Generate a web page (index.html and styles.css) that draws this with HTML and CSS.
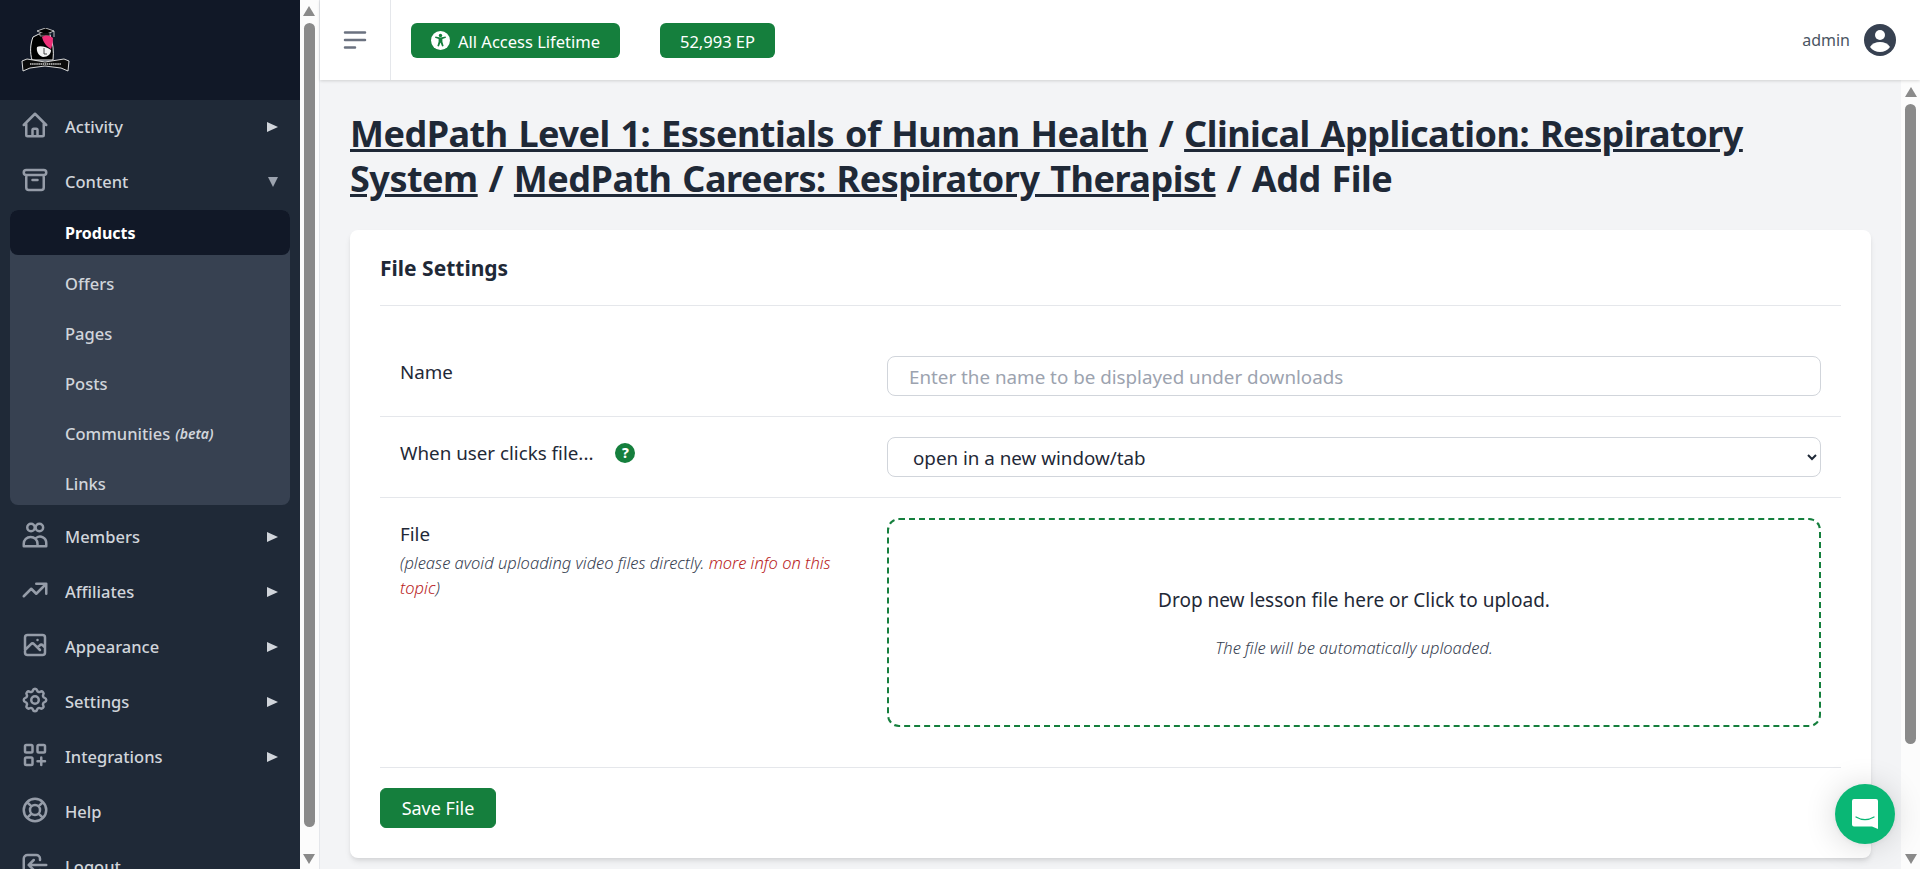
FILE: index.html
```html
<!DOCTYPE html>
<html lang="en">
<head>
<meta charset="utf-8">
<title>Add File</title>
<link rel="stylesheet" href="styles.css">
</head>
<body>
<div class="app">
  <aside class="sidebar-wrap">
    <nav class="sidebar">
      <div class="brand">
        <svg class="logo" viewBox="0 0 49 44" aria-hidden="true">
          <path d="M12 9C9 17 9 25 11 32H32C33 24 32 14 29 7L18 6Z" fill="#000" stroke="#fff" stroke-width=".9"/>
          <path d="M16 3 24.500 0 33 3 24.500 6.500Z" fill="#000" stroke="#fff" stroke-width=".7"/>
          <path d="M19 5V8H29V5" fill="#111" stroke="#ddd" stroke-width=".6"/>
          <path d="M33 3V9" stroke="#fff" stroke-width=".7"/>
          <path d="M21 9C24 6.500 29 7 32 10 32 14 31 18 30 21 26 19 22 14 21 9Z" fill="#ee2f78"/>
          <path d="M16 19C19 17 26 19 30 22 30 26 27 29 22 29 18 28 15 24 16 19Z" fill="#f2f2f2"/>
          <path d="M23 20V26H26" fill="none" stroke="#222" stroke-width=".8"/>
          <path d="M1 33 6 31 24 34 43 31 48 33 47 43 40 40 24 38 9 40 2 43Z" fill="#0b0b0b" stroke="#eee" stroke-width=".9"/>
          <path d="M9 36H40" stroke="#9b9b9b" stroke-width="2" stroke-dasharray="1.500 .6"/>
        </svg>
      </div>
      <ul class="menu">
        <li class="item"><svg class="ico" viewBox="0 0 24 24"><path d="M3 12l2-2m0 0l7-7 7 7M5 10v10a1 1 0 001 1h3m10-11l2 2m-2-2v10a1 1 0 01-1 1h-3m-6 0a1 1 0 001-1v-4a1 1 0 011-1h2a1 1 0 011 1v4a1 1 0 001 1m-6 0h6"/></svg><span class="label">Activity</span><span class="caret"></span></li>
        <li class="item"><svg class="ico" viewBox="0 0 24 24"><path d="M5 8h14M5 8a2 2 0 110-4h14a2 2 0 110 4M5 8v10a2 2 0 002 2h10a2 2 0 002-2V8m-9 4h4"/></svg><span class="label">Content</span><span class="caret down"></span></li>
        <li class="submenu">
          <a class="sub active">Products</a>
          <a class="sub">Offers</a>
          <a class="sub">Pages</a>
          <a class="sub">Posts</a>
          <a class="sub">Communities <em class="beta">(beta)</em></a>
          <a class="sub">Links</a>
        </li>
        <li class="item"><svg class="ico" viewBox="0 0 24 24"><circle cx="8.800" cy="6" r="3"/><circle cx="15.500" cy="6" r="3"/><path d="M3 21v-2a5.500 5.500 0 0111 0v2zM13 14.300A5 5 0 0121 18.500V21h-7"/></svg><span class="label">Members</span><span class="caret"></span></li>
        <li class="item"><svg class="ico" viewBox="0 0 24 24"><path d="M13 7h8m0 0v8m0-8l-8 8-4-4-6 6"/></svg><span class="label">Affiliates</span><span class="caret"></span></li>
        <li class="item"><svg class="ico" viewBox="0 0 24 24"><path d="M4 16l4.586-4.586a2 2 0 012.828 0L16 16m-2-2l1.586-1.586a2 2 0 012.828 0L20 14m-6-6h.01M6 20h12a2 2 0 002-2V6a2 2 0 00-2-2H6a2 2 0 00-2 2v12a2 2 0 002 2z"/></svg><span class="label">Appearance</span><span class="caret"></span></li>
        <li class="item"><svg class="ico" viewBox="0 0 24 24"><path d="M10.325 4.317c.426-1.756 2.924-1.756 3.350 0a1.724 1.724 0 002.573 1.066c1.543-.94 3.310.826 2.370 2.370a1.724 1.724 0 001.065 2.572c1.756.426 1.756 2.924 0 3.350a1.724 1.724 0 00-1.066 2.573c.94 1.543-.826 3.310-2.370 2.370a1.724 1.724 0 00-2.572 1.065c-.426 1.756-2.924 1.756-3.350 0a1.724 1.724 0 00-2.573-1.066c-1.543.94-3.310-.826-2.370-2.370a1.724 1.724 0 00-1.065-2.572c-1.756-.426-1.756-2.924 0-3.350a1.724 1.724 0 001.066-2.573c-.94-1.543.826-3.310 2.370-2.370.996.608 2.296.07 2.572-1.065z"/><path d="M15 12a3 3 0 11-6 0 3 3 0 016 0z"/></svg><span class="label">Settings</span><span class="caret"></span></li>
        <li class="item"><svg class="ico" viewBox="0 0 24 24"><path d="M4 5a1 1 0 011-1h4a1 1 0 011 1v4a1 1 0 01-1 1H5a1 1 0 01-1-1V5zM14 5a1 1 0 011-1h4a1 1 0 011 1v4a1 1 0 01-1 1h-4a1 1 0 01-1-1V5zM4 15a1 1 0 011-1h4a1 1 0 011 1v4a1 1 0 01-1 1H5a1 1 0 01-1-1v-4zM14 17h6m-3-3v6"/></svg><span class="label">Integrations</span><span class="caret"></span></li>
        <li class="item"><svg class="ico" viewBox="0 0 24 24"><path d="M18.364 5.636l-3.536 3.536m0 5.656l3.536 3.536M9.172 9.172L5.636 5.636m3.536 9.192l-3.536 3.536M21 12a9 9 0 11-18 0 9 9 0 0118 0zm-5 0a4 4 0 11-8 0 4 4 0 018 0z"/></svg><span class="label">Help</span></li>
        <li class="item"><svg class="ico" viewBox="0 0 24 24"><path d="M11 16l-4-4m0 0l4-4m-4 4h14m-5 4v1a3 3 0 01-3 3H6a3 3 0 01-3-3V7a3 3 0 013-3h7a3 3 0 013 3v1"/></svg><span class="label">Logout</span></li>
      </ul>
    </nav>
    <div class="scrollbar scrollbar-side">
      <span class="arrow up"></span>
      <span class="track"><span class="thumb thumb-left"></span></span>
      <span class="arrow dn"></span>
    </div>
  </aside>

  <div class="main">
    <header class="topbar">
      <div class="burger">
        <svg viewBox="0 0 24 24"><path d="M4 6h16M4 12h16M4 18h8"/></svg>
      </div>
      <div class="pills">
        <span class="pill pill-a">
          <svg class="a11y" viewBox="0 0 20 20"><circle cx="10" cy="10" r="10" fill="#fff"/><circle cx="10" cy="4.800" r="1.800" fill="#157f3d"/><path d="M4.200 7.200 8 8.400V11.200L6.700 15.800 8.300 16.300 10 12 11.700 16.300 13.300 15.800 12 11.200V8.400L15.800 7.200 15.300 5.900C12 7 8 7 4.700 5.900Z" fill="#157f3d"/></svg>
          <span class="pill-text">All Access Lifetime</span>
        </span>
        <span class="pill pill-b"><span class="pill-text">52,993 EP</span></span>
      </div>
      <div class="user">
        <span class="username">admin</span>
        <svg class="avatar" viewBox="0 0 32 32"><circle cx="16" cy="16" r="16" fill="#374151"/><circle cx="16" cy="11" r="5" fill="#fff"/><path d="M6 23c2-3.200 5.800-5 10-5s8 1.800 10 5c-2.500 3.200-6 5-10 5s-7.500-1.800-10-5z" fill="#fff"/></svg>
      </div>
    </header>
    <div class="content-wrap">
      <main class="content">
        <h1 class="title"><a>MedPath Level 1: Essentials of Human Health</a> / <a>Clinical Application: Respiratory System</a> / <a>MedPath Careers: Respiratory Therapist</a> / Add File</h1>
        <section class="card">
          <h2 class="card-title">File Settings</h2>
          <div class="row row-first">
            <label class="cell-label">Name</label>
            <div class="cell-field"><input class="input" type="text" placeholder="Enter the name to be displayed under downloads"></div>
          </div>
          <div class="row">
            <label class="cell-label">When user clicks file... <span class="help">?</span></label>
            <div class="cell-field"><select class="input select"><option>open in a new window/tab</option></select></div>
          </div>
          <div class="row row-file">
            <div class="cell-label">File
              <p class="hint">(please avoid uploading video files directly. <span class="hint-link">more info on this topic</span>)</p>
            </div>
            <div class="cell-field">
              <div class="drop">
                <p class="drop-main">Drop new lesson file here or Click to upload.</p>
                <p class="drop-sub">The file will be automatically uploaded.</p>
              </div>
            </div>
          </div>
          <div class="actions"><button class="save" type="button">Save File</button></div>
        </section>
      </main>
      <div class="scrollbar scrollbar-main">
        <span class="arrow up"></span>
        <span class="track"><span class="thumb thumb-right"></span></span>
        <span class="arrow dn"></span>
      </div>
    </div>
  </div>
</div>
<div class="chat">
  <svg viewBox="0 0 26 30"><path d="M2 0h22a2 2 0 012 2v28l-6-2.500H2a2 2 0 01-2-2V2a2 2 0 012-2z" fill="#fff"/><path d="M4 18c5.500 3.200 12.500 3.200 18 0" fill="none" stroke="#0ab775" stroke-width="1.300" stroke-linecap="round"/></svg>
</div>
</body>
</html>
```
FILE: styles.css
```css
* { box-sizing: border-box; }
html, body { margin: 0; height: 100%; overflow: hidden; }
body { font-family: "Noto Sans", sans-serif; color: #1f2937; background: #f3f4f6; }
.app { display: flex; height: 869px; }

.sidebar-wrap { display: flex; flex: none; width: 320px; height: 869px; }
.sidebar { width: 300px; background: #1f2937; height: 869px; overflow: hidden; }
.brand { height: 100px; background: #111827; display: flex; align-items: center; padding-left: 21px; }
.logo { width: 49px; height: 44px; }
.menu { list-style: none; margin: 0; padding: 0; }
.item { display: flex; align-items: center; height: 55px; padding: 0 22px 2px 20px; color: #d1d5db; font-size: 16.500px; font-weight: 500; }
.ico { width: 30px; height: 30px; flex: none; fill: none; stroke: #959ca8; stroke-width: 2; stroke-linecap: round; stroke-linejoin: round; margin: 0 15px 3px 0; }
.label { flex: 1; }
.caret { width: 0; height: 0; border-left: 11px solid #d1d5db; border-top: 5px solid transparent; border-bottom: 5px solid transparent; }
.caret.down { border-left: 5.500px solid transparent; border-right: 5.500px solid transparent; border-top: 10px solid #9ca3af; border-bottom: 0; }
.submenu { margin: 0 10px 5px; background: #374151; border-radius: 8px; }
.sub { display: flex; align-items: center; height: 50px; padding: 6px 0 0 55px; color: #d1d5db; font-size: 16.500px; font-weight: 500; border-radius: 8px; gap: 5px; }
.sub.active { height: 45px; padding-top: 0; background: #111827; color: #fff; font-size: 16px; font-weight: 700; }
.beta { font-size: 14px; font-weight: 600; }

.scrollbar { background: #fcfcfc; display: flex; flex-direction: column; align-items: center; }
.scrollbar-side { width: 20px; padding: 6px 1px 5px 0; border-right: 1px solid #e5e7eb; }
.scrollbar-main { width: 19px; padding: 7px 0 5px; }
.arrow { width: 0; height: 0; flex: none; border-left: 6.500px solid transparent; border-right: 6.500px solid transparent; }
.arrow.up { border-bottom: 10px solid #8a8a8a; }
.arrow.dn { border-top: 10px solid #8a8a8a; }
.track { flex: 1; width: 100%; display: flex; justify-content: center; }
.thumb { display: block; width: 11px; background: #8a8a8a; border-radius: 6px; }
.thumb-left { height: 804px; margin-top: 7px; }
.thumb-right { height: 640px; margin-top: 7px; }

.main { flex: 1; min-width: 0; display: flex; flex-direction: column; height: 869px; }
.topbar { flex: none; height: 80px; background: #fff; display: flex; align-items: center; box-shadow: 0 1px 3px rgba(0,0,0,.15); position: relative; z-index: 1; }
.burger { width: 71px; height: 80px; border-right: 1px solid #e5e7eb; display: flex; align-items: center; justify-content: center; }
.burger svg { width: 30px; height: 30px; fill: none; stroke: #6b7280; stroke-width: 2; stroke-linecap: round; }
.pills { display: flex; gap: 40px; margin-left: 20px; flex: 1; }
.pill { display: inline-flex; align-items: center; height: 35px; background: #157f3d; color: #fff; border-radius: 6px; font-size: 16.500px; }
.pill-text { padding-top: 2px; }
.pill-a { width: 209px; padding-left: 20px; gap: 8px; }
.pill-b { width: 115px; justify-content: center; }
.a11y { width: 19px; height: 19px; }
.user { display: flex; align-items: center; gap: 14px; padding-right: 24px; }
.username { font-size: 16px; color: #4b5563; }
.avatar { width: 32px; height: 32px; }

.content-wrap { flex: 1; min-height: 0; display: flex; }
.content { flex: 1; min-width: 0; padding: 31px 30px 0 30px; overflow: hidden; }
.title { margin: 0 0 29px; font-size: 36px; line-height: 45px; font-weight: 700; letter-spacing: -.5px; word-spacing: 2px; color: #1f2937; }
.title a { text-decoration: underline; }
.card { background: #fff; border-radius: 8px; box-shadow: 0 4px 6px -1px rgba(0,0,0,.1), 0 2px 4px -1px rgba(0,0,0,.06); padding: 0 30px; height: 628px; }
.card-title { margin: 0; height: 76px; display: flex; align-items: center; font-size: 21px; font-weight: 700; border-bottom: 1px solid #e5e7eb; }
.row { display: flex; padding: 20px; border-bottom: 1px solid #e5e7eb; }
.row-first { margin-top: 30px; }
.row-file { padding-bottom: 40px; }
.cell-label { width: 487px; flex: none; font-size: 18.800px; line-height: 28px; padding: 2px 40px 0 0; }
.cell-field { flex: 1; min-width: 0; }
.help { display: inline-flex; width: 20px; height: 20px; margin-left: 17px; border-radius: 50%; background: #157f3d; color: #fff; font-size: 14px; font-weight: 800; align-items: center; justify-content: center; vertical-align: 2px; }
.input { display: block; width: 100%; height: 40px; padding: 2px 21px 0; border: 1px solid #d1d5db; border-radius: 8px; background: #fff; font: 18.800px/28px "Noto Sans", sans-serif; color: #1f2937; }
.input::placeholder { color: #9ca3af; }
.hint { margin: 2px 0 0; font-size: 16.500px; font-style: italic; font-weight: 300; line-height: 25px; color: #374151; }
.hint-link { color: #b91c1c; }
.drop { height: 209px; border: 2px dashed #157f3d; border-radius: 12px; display: flex; flex-direction: column; align-items: center; justify-content: center; text-align: center; }
.drop-main { margin: 0 0 23px; font-size: 19px; line-height: 28px; }
.drop-sub { margin: 0; font-size: 16.500px; font-style: italic; font-weight: 300; line-height: 22px; color: #374151; }
.actions { padding-top: 20px; }
.save { height: 40px; width: 116px; padding: 0; background: #157f3d; color: #fff; border: 1px solid #157f3d; border-radius: 6px; font: 400 18px "Noto Sans", sans-serif; }

.chat { position: fixed; left: 1835px; bottom: 25px; width: 60px; height: 60px; border-radius: 50%; background: #0ab775; display: flex; align-items: center; justify-content: center; box-shadow: 0 1px 6px rgba(0,0,0,.06), 0 2px 32px rgba(0,0,0,.16); }
.chat svg { width: 26px; height: 30px; }
```
